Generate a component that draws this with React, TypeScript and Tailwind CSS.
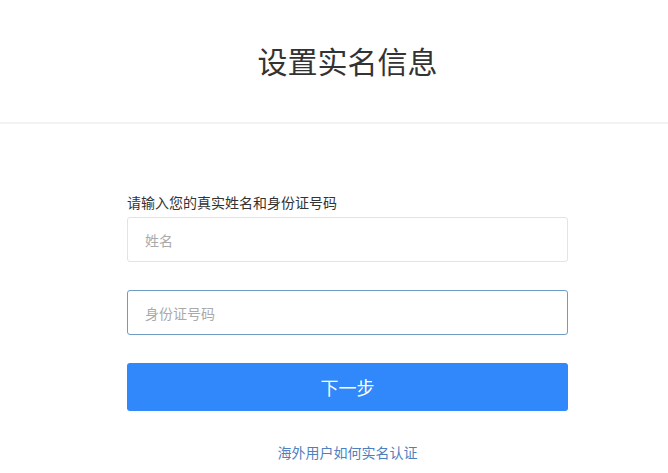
import React from "react";

export default function App() {
  const font = { fontFamily: '"Noto Sans CJK SC", "Noto Sans", sans-serif' };
  return (
    <div className="w-[668px] h-[473px] bg-white overflow-hidden" style={font}>
      <div className="h-[124px] border-b-2 border-[#f2f2f2] flex items-center">
        <div className="ml-[127px] w-[441px] text-center text-[30px] leading-[40px] text-[#333333] pb-[2px]">
          设置实名信息
        </div>
      </div>
      <div className="ml-[127px] w-[441px] pt-[68px] flex flex-col">
        <div className="text-[14px] leading-[20px] text-[#333333] mb-[5px]">
          请输入您的真实姓名和身份证号码
        </div>
        <input
          className="h-[45px] w-full border border-[#e3e3e3] rounded-[3px] pl-[17px] text-[14px] text-[#333] placeholder:text-[#aaaaaa] outline-none"
          placeholder="姓名"
        />
        <input
          className="mt-[28px] h-[45px] w-full border border-[#6f9cc3] rounded-[3px] pl-[17px] text-[14px] text-[#333] placeholder:text-[#aaaaaa] outline-none"
          placeholder="身份证号码"
        />
        <button className="mt-[28px] h-[48px] w-full bg-[#3088fa] rounded-[3px] text-white text-[18px] leading-[24px]">
          下一步
        </button>
        <a className="mt-[31px] text-center text-[14px] leading-[20px] text-[#4f7fbf]">
          海外用户如何实名认证
        </a>
      </div>
    </div>
  );
}
